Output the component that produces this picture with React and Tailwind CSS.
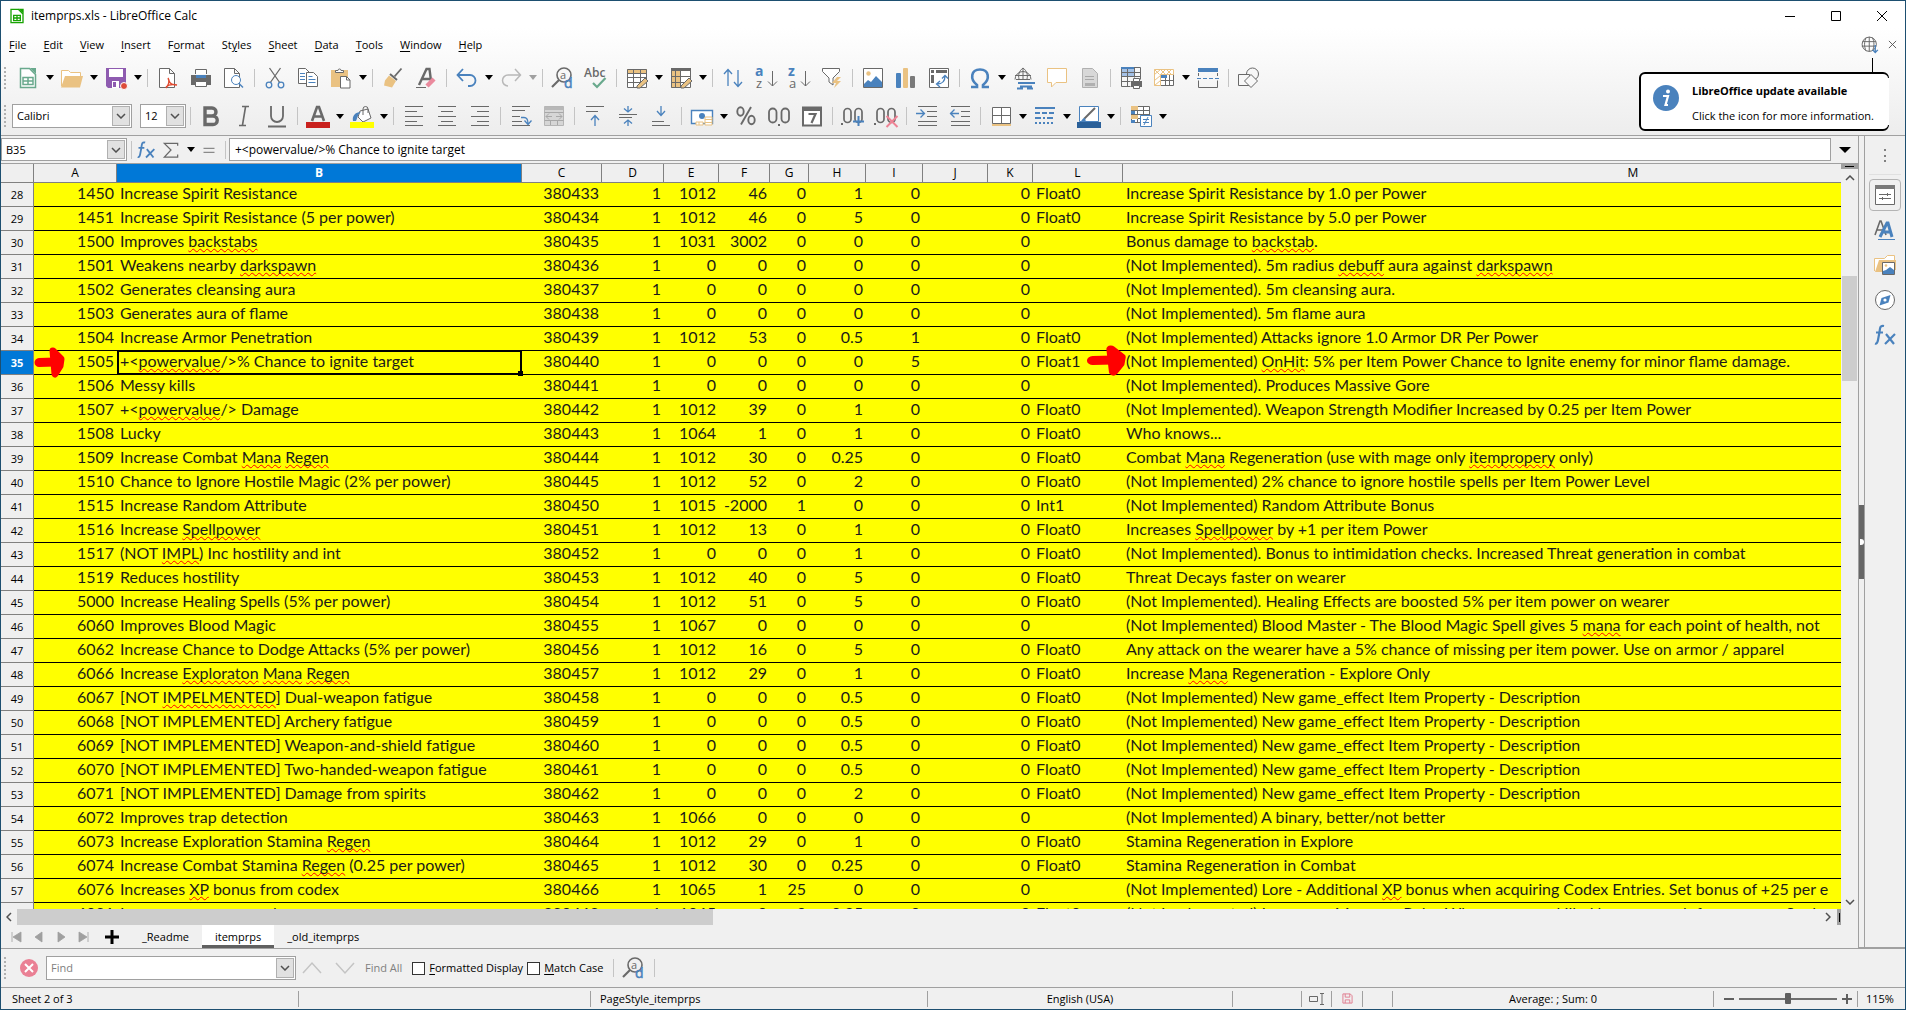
import { useState } from 'react';

const GRAY = '#696969';
const BLUE = '#4a82bd';
const TAN = '#eac282';

const COLUMNS = [
  { name: 'A', width: 'w-[83px]' },
  { name: 'B', width: 'w-[405px]' },
  { name: 'C', width: 'w-[80px]' },
  { name: 'D', width: 'w-[62px]' },
  { name: 'E', width: 'w-[55px]' },
  { name: 'F', width: 'w-[51px]' },
  { name: 'G', width: 'w-[39px]' },
  { name: 'H', width: 'w-[57px]' },
  { name: 'I', width: 'w-[57px]' },
  { name: 'J', width: 'w-[65px]' },
  { name: 'K', width: 'w-[45px]' },
  { name: 'L', width: 'w-[90px]' },
  { name: 'M', width: 'w-[1021px]' },
];

// words between tildes get the spell check underline
// [row, A, B, C, D, E, F, G, H, I, K, L, M]
const ROWS = [
  [28, 1450, 'Increase Spirit Resistance', 380433, 1, 1012, 46, 0, 1, 0, 0, 'Float0', 'Increase Spirit Resistance by 1.0 per Power'],
  [29, 1451, 'Increase Spirit Resistance (5 per power)', 380434, 1, 1012, 46, 0, 5, 0, 0, 'Float0', 'Increase Spirit Resistance by 5.0 per Power'],
  [30, 1500, 'Improves ~backstabs~', 380435, 1, 1031, 3002, 0, 0, 0, 0, '', 'Bonus damage to ~backstab~.'],
  [31, 1501, 'Weakens nearby ~darkspawn~', 380436, 1, 0, 0, 0, 0, 0, 0, '', '(Not Implemented). 5m radius ~debuff~ aura against ~darkspawn~'],
  [32, 1502, 'Generates cleansing aura', 380437, 1, 0, 0, 0, 0, 0, 0, '', '(Not Implemented). 5m cleansing aura.'],
  [33, 1503, 'Generates aura of flame', 380438, 1, 0, 0, 0, 0, 0, 0, '', '(Not Implemented). 5m flame aura'],
  [34, 1504, 'Increase Armor Penetration', 380439, 1, 1012, 53, 0, 0.5, 1, 0, 'Float0', '(Not Implemented) Attacks ignore 1.0 Armor DR Per Power'],
  [35, 1505, '+<~powervalue~/>% Chance to ignite target', 380440, 1, 0, 0, 0, 0, 5, 0, 'Float1', '(Not Implemented) ~OnHit~: 5% per Item Power Chance to Ignite enemy for minor flame damage.'],
  [36, 1506, 'Messy kills', 380441, 1, 0, 0, 0, 0, 0, 0, '', '(Not Implemented). Produces Massive Gore'],
  [37, 1507, '+<~powervalue~/> Damage', 380442, 1, 1012, 39, 0, 1, 0, 0, 'Float0', '(Not Implemented). Weapon Strength Modifier Increased by 0.25 per Item Power'],
  [38, 1508, 'Lucky', 380443, 1, 1064, 1, 0, 1, 0, 0, 'Float0', 'Who knows...'],
  [39, 1509, 'Increase Combat ~Mana~ ~Regen~', 380444, 1, 1012, 30, 0, 0.25, 0, 0, 'Float0', 'Combat ~Mana~ Regeneration (use with mage only ~itempropery~ only)'],
  [40, 1510, 'Chance to Ignore Hostile Magic (2% per power)', 380445, 1, 1012, 52, 0, 2, 0, 0, 'Float0', '(Not Implemented) 2% chance to ignore hostile spells per Item Power Level'],
  [41, 1515, 'Increase Random Attribute', 380450, 1, 1015, -2000, 1, 0, 0, 0, 'Int1', '(Not Implemented) Random Attribute Bonus'],
  [42, 1516, 'Increase ~Spellpower~', 380451, 1, 1012, 13, 0, 1, 0, 0, 'Float0', 'Increases ~Spellpower~ by +1 per item Power'],
  [43, 1517, '(NOT ~IMPL~) Inc hostility and int', 380452, 1, 0, 0, 0, 1, 0, 0, 'Float0', '(Not Implemented). Bonus to intimidation checks. Increased Threat generation in combat'],
  [44, 1519, 'Reduces hostility', 380453, 1, 1012, 40, 0, 5, 0, 0, 'Float0', 'Threat Decays faster on wearer'],
  [45, 5000, 'Increase Healing Spells (5% per power)', 380454, 1, 1012, 51, 0, 5, 0, 0, 'Float0', '(Not Implemented). Healing Effects are boosted 5% per item power on wearer'],
  [46, 6060, 'Improves Blood Magic', 380455, 1, 1067, 0, 0, 0, 0, 0, '', '(Not Implemented) Blood Master - The Blood Magic Spell gives 5 ~mana~ for each point of health, not'],
  [47, 6062, 'Increase Chance to Dodge Attacks (5% per power)', 380456, 1, 1012, 16, 0, 5, 0, 0, 'Float0', 'Any attack on the wearer have a 5% chance of missing per item power. Use on armor / apparel'],
  [48, 6066, 'Increase ~Exploraton~ ~Mana~ ~Regen~', 380457, 1, 1012, 29, 0, 1, 0, 0, 'Float0', 'Increase ~Mana~ Regeneration - Explore Only'],
  [49, 6067, '[NOT ~IMPELMENTED~] Dual-weapon fatigue', 380458, 1, 0, 0, 0, 0.5, 0, 0, 'Float0', '(Not Implemented) New game_effect Item Property - Description'],
  [50, 6068, '[NOT IMPLEMENTED] Archery fatigue', 380459, 1, 0, 0, 0, 0.5, 0, 0, 'Float0', '(Not Implemented) New game_effect Item Property - Description'],
  [51, 6069, '[NOT IMPLEMENTED] Weapon-and-shield fatigue', 380460, 1, 0, 0, 0, 0.5, 0, 0, 'Float0', '(Not Implemented) New game_effect Item Property - Description'],
  [52, 6070, '[NOT IMPLEMENTED] Two-handed-weapon fatigue', 380461, 1, 0, 0, 0, 0.5, 0, 0, 'Float0', '(Not Implemented) New game_effect Item Property - Description'],
  [53, 6071, '[NOT IMPLEMENTED] Damage from spirits', 380462, 1, 0, 0, 0, 2, 0, 0, 'Float0', '(Not Implemented) New game_effect Item Property - Description'],
  [54, 6072, 'Improves trap detection', 380463, 1, 1066, 0, 0, 0, 0, 0, '', '(Not Implemented) A binary, better/not better'],
  [55, 6073, 'Increase Exploration Stamina ~Regen~', 380464, 1, 1012, 29, 0, 1, 0, 0, 'Float0', 'Stamina Regeneration in Explore'],
  [56, 6074, 'Increase Combat Stamina ~Regen~ (0.25 per power)', 380465, 1, 1012, 30, 0, 0.25, 0, 0, 'Float0', 'Stamina Regeneration in Combat'],
  [57, 6076, 'Increases ~XP~ bonus from codex', 380466, 1, 1065, 1, 25, 0, 0, 0, '', '(Not Implemented) Lore - Additional ~XP~ bonus when acquiring Codex Entries. Set bonus of +25 per e'],
  [58, 6081, 'Increase mana as used', 380468, 1, 1065, 0, 0, 0.25, 0, 0, 'Float0', '(Not Implemented) Immune a Manner - Rules When corpses skilled because each foe senses a Soul'],
];

const Svg = ({ children, className = 'h-6 w-6' }) => (
  <svg viewBox="0 0 24 24" fill="none" stroke={GRAY} className={`overflow-visible ${className}`} aria-hidden="true">
    {children}
  </svg>
);

const Page = ({ stroke = GRAY, x = 4 }) => (
  <path d={`M${x + 0.5} 2.5h10l5 5v14h-15z M${x + 10.5} 2.5v5h5`} stroke={stroke} fill="#fff" />
);

const ICONS = {
  calc: (
    <>
      <path d="M4.5 2.5h9l6 6v13h-15z" stroke="#69a98d" fill="#fff" strokeWidth="1.5" />
      <path d="M14 2h6v6z" fill="#69a98d" stroke="none" />
      <path d="M7 11.500h10v7H7zM7 15h10M12 11.500v7" stroke="#69a98d" strokeWidth="1.5" />
    </>
  ),
  calcApp: (
    <>
      <path d="M3 2h11l7 7v13H3z" stroke="#18a303" fill="#fff" strokeWidth="2" />
      <path d="M14 1h8v8z" fill="#18a303" stroke="none" />
      <path d="M7 11h10v8H7zM7 15h10M12 11v8" stroke="#18a303" strokeWidth="2" />
    </>
  ),
  open: (
    <>
      <path d="M1.500 20V4.500h7l2 2h10V10" stroke={TAN} fill="#fff" />
      <path d="M1 21.500 5 10h18l-3 11.500z" fill={TAN} stroke="none" />
    </>
  ),
  save: (
    <>
      <path d="M2 2h20v20H4l-2-2z" fill="#8e5bb0" stroke="none" />
      <path d="M5 3h14v8H5zM8 15h7v7H8z" fill="#fff" stroke="none" />
      <path d="M9 16h3v5H9z" fill="#8e5bb0" stroke="none" />
      <circle cx="20" cy="20" r="3.500" fill="#dd4b39" stroke="#fff" />
    </>
  ),
  pdf: (
    <>
      <Page x={3} />
      <path d="M12 12c2 3 1 6-2 10M13 15c1 3 4 4 8 4M10 21c3-3 6-3 11-2" stroke="#e0492f" strokeWidth="1.400" />
    </>
  ),
  print: (
    <>
      <path d="M6.500 8V3.500h11V8" fill="#fff" />
      <path d="M2 9h20v10H2z" fill={GRAY} stroke="none" />
      <path d="M7 9h10v3H7z" fill={BLUE} stroke="none" />
      <path d="M6.500 15.500h11v5h-11z" fill="#fff" />
    </>
  ),
  preview: (
    <>
      <Page x={2} />
      <circle cx="14" cy="14" r="4.500" stroke={BLUE} fill="#fff" />
      <path d="m17 17.500 4 4" stroke={BLUE} strokeWidth="1.500" />
    </>
  ),
  cut: (
    <>
      <path d="M6.500 2 17 17M17.500 2 7 17" strokeWidth="1.300" />
      <circle cx="6" cy="19" r="2.800" stroke={BLUE} strokeWidth="1.300" />
      <circle cx="18" cy="19" r="2.800" stroke={BLUE} strokeWidth="1.300" />
    </>
  ),
  copy: (
    <>
      <path d="M2.500 2.500h7l4 4v11h-11z" fill="#fff" />
      <path d="M10.500 6.500h7l4 4v10h-11z" fill="#fff" />
      <path d="M4 7.500h5M4 10.500h5M4 13.500h5M12.500 13.500h7M12.500 16.500h7M12.500 10.500h4" stroke={BLUE} />
    </>
  ),
  paste: (
    <>
      <path d="M2 4h17v17H2z" fill={TAN} stroke="none" />
      <path d="M6.500 6.500v-2h2.500a1.500 1.500 0 0 1 3 0h2.500v2z" fill="#fff" />
      <path d="M11.500 10.500h6l3.500 3.500v8h-9.500z" fill="#fff" />
      <path d="M17.500 10.500V14H21" />
    </>
  ),
  brush: (
    <>
      <path d="m20.500 2.500-7 8" strokeWidth="1.800" />
      <path d="m9 8 7 6" strokeWidth="2" />
      <path d="M8 9.500 15 15l-4 6.500-8-2 1-5z" fill={TAN} stroke="none" />
    </>
  ),
  clear: (
    <>
      <path d="M5 19 12.500 3h3L17 15M8 13h8" strokeWidth="2.400" />
      <path d="M2 21.500h10" />
      <path d="m13 20 7-7" stroke="#ea8a9d" strokeWidth="4.500" />
    </>
  ),
  undo: <path d="M8 3 2.500 9 8 15M3 9h12a5.500 5.500 0 0 1 0 11h-2" stroke={BLUE} strokeWidth="1.800" />,
  redo: <path d="m16 3 5.500 6L16 15M21 9H9a5.500 5.500 0 0 0 0 11" stroke="#b8b8b8" strokeWidth="1.500" />,
  find: (
    <>
      <circle cx="13" cy="9" r="7" strokeWidth="1.600" />
      <path d="m8 14-7 7" strokeWidth="2.200" />
      <text x="9" y="13" fontSize="11" fontFamily="Open Sans, sans-serif" fill={GRAY} stroke="none">a</text>
      <text x="13" y="22" fontSize="14" fontFamily="Open Sans, sans-serif" fill={BLUE} stroke={BLUE} strokeWidth="0.500">d</text>
    </>
  ),
  spell: (
    <>
      <text x="0" y="11" fontSize="12" fontWeight="600" fontFamily="Open Sans, sans-serif" fill={GRAY} stroke="none">Abc</text>
      <path d="m9 17 4 4 8.500-9" stroke="#69a98d" strokeWidth="2.200" />
    </>
  ),
  rows: (
    <>
      <path d="M2.500 3.500h19v18h-19z" fill="#fff" />
      <path d="M2 3h20v4H2z" fill={TAN} stroke="none" />
      <path d="M2.500 3.500h19v4h-19zM2.500 11.500h19M2.500 16.500h19M8.500 3.500v18M15.500 3.500v18" />
      <path d="m12 20 8-8 3 3-8 7h-3z" fill={TAN} stroke={GRAY} />
    </>
  ),
  cols: (
    <>
      <path d="M2.500 3.500h19v18h-19z" fill="#fff" />
      <path d="M2 4h9v18H2z" fill={TAN} stroke="none" />
      <path d="M2 2h20v3H2z" fill={GRAY} stroke="none" />
      <path d="M2.500 3.500h19M2.500 10.500h19M2.500 16.500h19M2.500 3v18.500h9V3M21.500 4v8M6.500 4v18" />
      <path d="m12 20 8-8 3 3-8 7h-3z" fill={TAN} stroke={GRAY} />
    </>
  ),
  sort: <path d="M7 20V4M3 8l4-4.500L11 8M17 4v16M13 16l4 4.500 4-4.500" stroke={BLUE} strokeWidth="1.300" />,
  sortAsc: (
    <>
      <text x="1" y="10" fontSize="14" fontWeight="700" fontFamily="Open Sans, sans-serif" fill={BLUE} stroke="none">a</text>
      <text x="2" y="22" fontSize="13" fontFamily="Open Sans, sans-serif" fill={GRAY} stroke="none">z</text>
      <path d="M18.500 5v15M14 15.500l4.500 4.500 4.500-4.500" />
    </>
  ),
  sortDesc: (
    <>
      <text x="1" y="10" fontSize="14" fontWeight="700" fontFamily="Open Sans, sans-serif" fill={BLUE} stroke="none">z</text>
      <text x="2" y="22" fontSize="13" fontFamily="Open Sans, sans-serif" fill={GRAY} stroke="none">a</text>
      <path d="M18.500 5v15M14 15.500l4.500 4.500 4.500-4.500" />
    </>
  ),
  filter: (
    <>
      <path d="M2.500 2.500h17v3L13 12v7l-4-3v-4L2.500 5.500z" fill="#fff" />
      <path d="m17 11-5 6h4l-2 5 7-7h-4l4-4z" fill={TAN} stroke="none" />
    </>
  ),
  image: (
    <>
      <path d="M2.500 2.500h19v19h-19z" fill="#fff" />
      <circle cx="7.500" cy="7.500" r="2.200" fill={TAN} stroke="none" />
      <path d="M3 21v-3l4-4 3 2 5-6 6 6v5z" fill={BLUE} stroke="none" />
    </>
  ),
  chart: (
    <>
      <rect x="2" y="7" width="5" height="15" rx="1" fill={BLUE} stroke="none" />
      <rect x="9" y="2" width="5" height="20" rx="1" fill={TAN} stroke="none" />
      <rect x="16" y="10" width="5" height="12" rx="1" fill="#7a7a7a" stroke="none" />
    </>
  ),
  pivot: (
    <>
      <path d="M2.500 2.500h19v19h-19z" fill="#fff" />
      <path d="M4 4h3v3H4zM9 4h11v3H9zM4 9h3v8H4z" fill={GRAY} stroke="none" />
      <path d="M10 18c5 0 8-3 8-8M15 12.500l3-3 3 3M13 15l-3.500 3 3.500 3" stroke={BLUE} strokeWidth="1.300" />
    </>
  ),
  omega: (
    <path d="M3 21h6v-2C1.500 13 3 3.500 12 3.500S22.500 13 15 19v2h6" stroke={BLUE} strokeWidth="2.600" />
  ),
  link: (
    <>
      <path d="M3 13.500a8 8 0 1 1 16 0M3 9.500h16M4 13.500h14M11 2v12M7 13c-1-4 0-8 4-11 4 3 5 7 4 11" />
      <path d="M6 17h7M15 17h8M8 20.500h12M5 22.500h6M15 22.500h6M11 17h4" stroke={BLUE} strokeWidth="2" />
    </>
  ),
  comment: <path d="M2.500 2.500h19v14H11l-4.500 4.500V16.500h-4z" stroke={TAN} fill="#fff" />,
  header: (
    <>
      <path d="M4.500 2.500h10l5 5v14h-15z" fill="#d8d8d8" stroke="#b0b0b0" />
      <path d="M7 10.500h9M7 13.500h9" stroke="#a8a8a8" />
      <path d="M7 17h10v3H7z" fill="#b0b0b0" stroke="none" />
    </>
  ),
  printArea: (
    <>
      <path d="M2 2h13v8H2z" fill="#a4c1e6" stroke="none" />
      <path d="M2.500 1.500h19v12M2.500 1.500v19h9M2.500 6.500h19M2.500 10.500h19M2.500 15.500h9M8.500 1.500v19M15.500 1.500v10" />
      <path d="M2 1h13v2H2z" fill={BLUE} stroke="none" />
      <path d="M12 15h11v6H12z" fill={GRAY} stroke="none" />
      <path d="M14.500 12.500h6v3h-6zM14.500 19.500h6v3h-6z" fill="#fff" />
    </>
  ),
  freeze: (
    <>
      <path d="M8.500 8.500h13v11h-13M8.500 14.500h13M13.500 8.500v11M17.500 8.500v11" fill="#fff" />
      <path d="M2.500 3.500h19v5h-13v11h-6zM2.500 8.500l6-5M8.500 8.500l5-5M14.500 8.500l5-5M2.500 14.500l6-5M2.500 19.500l6-5M2.500 3.500l5 5M8.500 3.500l5 5M14.500 3.500l5 5" stroke={TAN} fill="#fff" />
      <path d="M9 9h6v3H9z" fill={BLUE} stroke="none" />
    </>
  ),
  split: (
    <>
      <path d="M2.500 7v3M21.500 7v3M2.500 14.500v7h19v-7" />
      <path d="M2 2h20v4H2z" fill={BLUE} stroke="none" />
      <path d="M1 12.500h22" stroke={BLUE} strokeDasharray="4 2" />
    </>
  ),
  shapes: (
    <>
      <circle cx="15.500" cy="8" r="6" />
      <path d="M1.500 8.500h11v11h-11z" fill="#f8f8f8" />
      <path d="m14 8.500 6.500 6.500-6.500 6.500L7.500 15z" fill="#f8f8f8" />
    </>
  ),
  bold: <path d="M6 4h7a4 4 0 0 1 0 8H6zM6 12h8a4.200 4.200 0 0 1 0 8.500H6z" strokeWidth="3.400" />,
  italic: <path d="M10 2.500h7M7 21.500h7M13.500 3 10.500 21" strokeWidth="1.600" />,
  underline: <path d="M6 2v10a6 6 0 0 0 12 0V2M3 22.500h18" strokeWidth="1.800" />,
  fontColor: (
    <>
      <path d="M6 17 11 3h2l5 14M8 12.500h8" strokeWidth="2.600" />
      <path d="M0 18h24v6H0z" fill="#c9211e" stroke="none" />
    </>
  ),
  fill: (
    <>
      <path d="M10 7 18 5l3 9-8 4-5-5z" fill="#fff" />
      <path d="M13 11V5a2.500 2.500 0 0 1 5 0v4" />
      <path d="M3 17c-1-5 2-9 8-9-4 3-3 5-5 9z" fill={BLUE} stroke="none" />
      <path d="M0 18h24v6H0z" fill="#ffff00" stroke="none" />
    </>
  ),
  alignLeft: <path d="M3 2.500h18M3 7.500h12M3 12.500h18M3 17.500h12M3 21.500h18" />,
  alignCenter: <path d="M3 2.500h18M6 7.500h12M3 12.500h18M6 17.500h12M3 21.500h18" />,
  alignRight: <path d="M3 2.500h18M9 7.500h12M3 12.500h18M9 17.500h12M3 21.500h18" />,
  wrap: (
    <>
      <path d="M3 2.500h18M3 6.500h13M3 12.500h8M3 17.500h10M3 21.500h18" />
      <path d="M12 13.500h3c3 0 4 2 4 6M15.500 16.500l3.500 4 3.500-4" stroke={BLUE} strokeWidth="1.300" />
    </>
  ),
  merge: (
    <>
      <path d="M2.500 2.500h19v19h-19z" fill="#d6d6d6" stroke="#b5b5b5" />
      <path d="M2 3h20v3H2z" fill="#b8b8b8" stroke="none" />
      <path d="M2.500 8.500h19M2.500 16.500h19M8.500 17v4M15.500 17v4M4 12.500h6M14 12.500h6M7 9.500 4 12.500l3 3M17 9.500l3 3-3 3" stroke="#a8a8a8" />
    </>
  ),
  alignTop: (
    <>
      <path d="M3 2.500h18M3 7.500h12" />
      <path d="M12 22V12M8 16l4-4.500 4 4.500" stroke={BLUE} strokeWidth="1.300" />
    </>
  ),
  alignMiddle: (
    <>
      <path d="M3 10.500h18M3 13.500h13" />
      <path d="M12 2v6M8 4.500 12 8l4-3.500M12 22v-6M8 19.500l4-3.500 4 3.500" stroke={BLUE} strokeWidth="1.300" />
    </>
  ),
  alignBottom: (
    <>
      <path d="M3 17.500h12M3 21.500h18" />
      <path d="M12 2v9M8 7l4 4.500L16 7" stroke={BLUE} strokeWidth="1.300" />
    </>
  ),
  currency: (
    <>
      <path d="M1.500 6.500h21v13h-21z" fill="#fff" stroke={BLUE} strokeWidth="1.400" />
      <circle cx="12" cy="12" r="3" fill={BLUE} stroke="none" />
      <path d="M15 13h7v8h-7zM6 18h7v3H6z" fill="#fff" stroke={TAN} />
      <path d="M15 15.500h7M15 18.500h7M9 18v3" stroke={TAN} />
    </>
  ),
  percent: (
    <>
      <ellipse cx="6.500" cy="7.500" rx="3.200" ry="4.200" strokeWidth="1.900" />
      <ellipse cx="17.500" cy="16" rx="3.200" ry="4.200" strokeWidth="1.900" />
      <path d="M17 3 7 20.500" strokeWidth="1.900" />
    </>
  ),
  number: (
    <>
      <rect x="2" y="4.500" width="7.500" height="14" rx="3.700" strokeWidth="1.800" />
      <rect x="14.500" y="4.500" width="7.500" height="14" rx="3.700" strokeWidth="1.800" />
      <path d="M11 20h2v2h-2z" fill={GRAY} stroke="none" />
    </>
  ),
  date: (
    <>
      <path d="M3 3.500h18v18H3z" fill="#fff" strokeWidth="2" />
      <path d="M2 3h20v4H2z" fill={GRAY} stroke="none" />
      <path d="M8.500 10h7l-4 9" strokeWidth="2.200" />
    </>
  ),
  addDecimal: (
    <>
      <rect x="3" y="4.500" width="7" height="14" rx="3.500" strokeWidth="1.700" />
      <rect x="14" y="4.500" width="7" height="14" rx="3.500" strokeWidth="1.700" />
      <path d="M0 19h2v2H0z" fill={GRAY} stroke="none" />
      <path d="M17.500 12v10M12 17.500h11" stroke={BLUE} strokeWidth="2" />
    </>
  ),
  delDecimal: (
    <>
      <rect x="3" y="4.500" width="7" height="14" rx="3.500" strokeWidth="1.700" />
      <rect x="14" y="4.500" width="7" height="14" rx="3.500" strokeWidth="1.700" />
      <path d="M0 19h2v2H0z" fill={GRAY} stroke="none" />
      <path d="m12.500 12 11 11m0-11-11 11" stroke="#ee8294" strokeWidth="2" />
    </>
  ),
  indent: (
    <>
      <path d="M3 2.500h19M12 7.500h10M12 12.500h10M3 17.500h19M3 21.500h19" />
      <path d="M1 9.500h8M5.500 5.500l4 4-4 4" stroke={BLUE} strokeWidth="1.300" />
    </>
  ),
  outdent: (
    <>
      <path d="M3 2.500h19M13 7.500h9M13 12.500h9M3 17.500h19M3 21.500h19" />
      <path d="M2 9.500h9M6.500 5.500l-4 4 4 4" stroke={BLUE} strokeWidth="1.300" />
    </>
  ),
  borders: (
    <>
      <path d="M3.500 3.500h18v16h-18zM12.500 3.500v16M3.500 11.500h18" fill="#fff" />
      <path d="M3 21h19" stroke={TAN} strokeWidth="2" />
    </>
  ),
  lineStyle: (
    <g stroke={BLUE} strokeWidth="2">
      <path d="M2 4h20" />
      <path d="M2 9h20" strokeDasharray="5 2" />
      <path d="M2 14h20" strokeDasharray="6 2 2 2" />
      <path d="M2 19h20" strokeDasharray="2 2" />
    </g>
  ),
  lineColor: (
    <>
      <path d="M2.500 2.500h19v15h-19z" fill="#fff" stroke={BLUE} />
      <path d="M18 4 7 15" strokeWidth="2" />
      <path d="M8 14c-3 0-3 3-5 4h6z" fill={BLUE} stroke="none" />
      <path d="M0 18h24v6H0z" fill="#2a6099" stroke="none" />
    </>
  ),
  conditional: (
    <>
      <path d="M2.500 2.500h18v16h-18zM8.500 2.500v16M14.500 2.500v16M2.500 6.500h18M2.500 10.500h18M2.500 14.500h18" fill="#fff" />
      <path d="M2 2h7v4H2zM2 11h7v4H2z" fill={TAN} stroke="none" />
      <path d="M2 7h4v3H2zM2 16h4v3H2z" fill={BLUE} stroke="none" />
      <path d="M11.500 11.500h11v11h-11zM14 15.500h6M14 18.500h6M19 13l-4 8" stroke={BLUE} fill="#fff" />
    </>
  ),
  fx: (
    <>
      <path d="M11 3C7 2 7 5 6.500 9L5 17c-.5 3-1.500 4-3 3.500M3 9.500h7" stroke={BLUE} strokeWidth="2.200" />
      <path d="m13 11 8 10m1-10-10 10" stroke={BLUE} strokeWidth="2.200" />
    </>
  ),
  sum: <path d="M20 7V4H4l8 8-8 8.500h16v-3" strokeWidth="1.500" />,
  equals: <path d="M1 8.500h22M1 16.500h22" stroke="#8a8a8a" strokeWidth="2.500" />,
  properties: (
    <>
      <path d="M2.500 2.500h19v19h-19z" fill="#fff" />
      <path d="M2 2h20v4H2z" fill="#7a7a7a" stroke="none" />
      <path d="M6 11.500h12M6 15.500h12M14.500 10v3M9.500 14v3" />
    </>
  ),
  styles: (
    <>
      <path d="M2 17 7 3h1l5 14M4 12h7" strokeWidth="1.600" />
      <path d="m7 19 7-14h1l4 14M10 14h8" stroke={BLUE} strokeWidth="3" />
      <path d="M5 21.500h17" stroke={BLUE} />
    </>
  ),
  gallery: (
    <>
      <path d="M1.500 18V5.500h10l3-3h7V7" stroke={TAN} fill="#fff" />
      <path d="M2 19 6 7h17v10H10v2z" fill={TAN} stroke="none" />
      <path d="M9.500 9.500h12v12h-12z" fill="#fff" />
      <path d="M10 21v-3l3-1 4-3 4 3v4z" fill={BLUE} stroke="none" />
      <circle cx="13" cy="12.500" r="1.300" fill={TAN} stroke="none" />
    </>
  ),
  navigator: (
    <>
      <circle cx="12" cy="12" r="9.500" fill="#fff" />
      <path d="m17.500 7-2 7.500-9 3 2-7.500z" fill={BLUE} stroke="none" />
      <circle cx="12" cy="12" r="1.600" fill="#fff" stroke="none" />
    </>
  ),
  update: (
    <>
      <circle cx="11" cy="11" r="9.500" strokeWidth="1.300" />
      <path d="M2 7.500h18M1 13.500h19M11 1v20M7 2c-3 5-3 13 0 18M15 2c3 5 3 13 0 18" strokeWidth="1.300" />
      <path d="M19 12v10M15.500 18.500 19 22l3.500-3.500" stroke={BLUE} strokeWidth="1.800" />
    </>
  ),
};

const Caret = ({ muted }) => (
  <svg viewBox="0 0 8 5" className={`h-[5px] w-2 ${muted ? 'fill-[#a0a0a0]' : 'fill-black'}`} aria-hidden="true">
    <path d="M0 0h8L4 5z" />
  </svg>
);

const Chevron = ({ className = '' }) => (
  <svg viewBox="0 0 10 6" fill="none" stroke="#505050" strokeWidth="1.500" className={`h-[6px] w-[10px] ${className}`} aria-hidden="true">
    <path d="m1 1 4 4 4-4" />
  </svg>
);

const Grip = () => <span className="h-[22px] w-0 shrink-0 border-l-2 border-dotted border-[#b0b0b0]" />;

const Separator = () => (
  <span className="flex w-2 shrink-0 justify-center">
    <span className="h-[18px] w-px bg-[#c4c4c4]" />
  </span>
);

// "|" is a separator, a trailing "+" adds a drop-down arrow
const Tools = ({ items }) =>
  items.map((item, i) => {
    if (item === '|') return <Separator key={i} />;
    const name = item.replace('+', '');
    return (
      <span key={i} className="flex shrink-0 items-center">
        <button type="button" aria-label={name} className="flex w-[33px] justify-center">
          <Svg>{ICONS[name]}</Svg>
        </button>
        {item.endsWith('+') && (
          <button type="button" aria-label={`${name} options`} className="flex h-6 w-[11px] items-center justify-center">
            <Caret muted={name === 'redo'} />
          </button>
        )}
      </span>
    );
  });

const STANDARD = ['calc+', 'open+', 'save+', '|', 'pdf', 'print', 'preview', '|', 'cut', 'copy', 'paste+', '|', 'brush', 'clear', '|', 'undo+', 'redo+', '|', 'find', 'spell', '|', 'rows+', 'cols+', '|', 'sort', 'sortAsc', 'sortDesc', 'filter', '|', 'image', 'chart', 'pivot', '|', 'omega+', 'link', 'comment', 'header', '|', 'printArea', 'freeze+', 'split', '|', 'shapes'];

const FORMATTING = ['|', 'bold', 'italic', 'underline', '|', 'fontColor+', 'fill+', '|', 'alignLeft', 'alignCenter', 'alignRight', '|', 'wrap', 'merge', '|', 'alignTop', 'alignMiddle', 'alignBottom', '|', 'currency+', 'percent', 'number', 'date', '|', 'addDecimal', 'delDecimal', '|', 'indent', 'outdent', '|', 'borders+', 'lineStyle+', 'lineColor+', '|', 'conditional+'];

// [text before the access key, access key, rest]
const MENUS = [
  ['', 'F', 'ile'], ['', 'E', 'dit'], ['', 'V', 'iew'], ['', 'I', 'nsert'], ['F', 'o', 'rmat'], ['St', 'y', 'les'],
  ['', 'S', 'heet'], ['', 'D', 'ata'], ['', 'T', 'ools'], ['', 'W', 'indow'], ['', 'H', 'elp'],
];

const Combo = ({ label, value, placeholder, className }) => (
  <div className={`flex items-stretch border border-[#a0a0a0] bg-white p-px ${className}`}>
    <input
      aria-label={label}
      defaultValue={value}
      placeholder={placeholder}
      className="min-w-0 flex-1 px-[3px] outline-none placeholder:text-[#808080]"
    />
    <button type="button" aria-label={`${label} list`} className="flex w-[18px] items-center justify-center border border-[#b0b0b0] bg-[#e1e1e1]">
      <Chevron />
    </button>
  </div>
);

const SpellText = ({ text }) =>
  text.split('~').map((part, i) =>
    i % 2 ? (
      <span key={i} className="underline decoration-[#ff0000] decoration-wavy decoration-1 underline-offset-1 [text-decoration-skip-ink:none]">{part}</span>
    ) : (
      part
    )
  );

const RedArrow = ({ className }) => (
  <svg viewBox="0 0 34 34" preserveAspectRatio="none" fill="none" stroke="#ff0000" strokeLinecap="round" strokeLinejoin="round" className={`pointer-events-none absolute z-10 h-[34px] ${className}`} aria-hidden="true">
    <path d="M6 17.500 22 17" strokeWidth="9" />
    <path d="m20 6 8 8-1 7-5 8z" fill="#ff0000" strokeWidth="7" />
  </svg>
);

const Cell = ({ value, children }) => (
  <td className={`relative h-6 border-b border-black px-[3px] pb-[3px] ${typeof value === 'number' ? 'text-right' : 'text-left'}`}>
    {typeof value === 'string' ? <SpellText text={value} /> : value}
    {children}
  </td>
);

const Sheet = ({ selected }) => (
  <table className="w-max table-fixed border-separate border-spacing-0 whitespace-nowrap bg-[#ffff00] font-['Lato',sans-serif] text-[16px] leading-[20px] text-[#1a1a1a]">
    <thead>
      <tr className="bg-[#efefef] font-['Open_Sans',sans-serif] text-[12px] leading-[18px] text-black">
        <th aria-label="Select all" className="h-[19px] w-[33px] border-b border-r border-[#808080]" />
        {COLUMNS.map((col) => (
          <th
            key={col.name}
            className={`h-[19px] border-b border-r border-[#808080] p-0 ${col.width} ${
              col.name === 'B' ? 'bg-[#0078d7] font-bold text-white' : 'font-normal'
            }`}
          >
            {col.name}
          </th>
        ))}
      </tr>
    </thead>
    <tbody>
      {ROWS.map(([row, a, b, c, d, e, f, g, h, i, k, l, m]) => (
        <tr key={row}>
          <th
            className={`h-6 border-b border-r border-[#808080] p-0 font-['Open_Sans',sans-serif] text-[11px] ${
              row === selected ? 'bg-[#0078d7] font-bold text-white' : 'bg-[#efefef] font-normal text-black'
            }`}
          >
            {row}
          </th>
          <Cell value={a}>{row === selected && <RedArrow className="-left-px -top-1.5 w-[34px]" />}</Cell>
          <Cell value={b}>
            {row === selected && (
              <span className="pointer-events-none absolute -inset-y-px inset-x-0 border-2 border-black">
                <span className="absolute -bottom-[3px] -right-[3px] h-[5px] w-[5px] bg-black" />
              </span>
            )}
          </Cell>
          <Cell value={c} />
          <Cell value={d} />
          <Cell value={e} />
          <Cell value={f} />
          <Cell value={g} />
          <Cell value={h} />
          <Cell value={i} />
          <Cell />
          <Cell value={k} />
          <Cell value={l}>{row === selected && <RedArrow className="-right-1.5 -top-2 w-[44px]" />}</Cell>
          <Cell value={m} />
        </tr>
      ))}
    </tbody>
  </table>
);

const UpdateCallout = () => (
  <div className="absolute right-4 top-[71px] z-20 flex w-[250px] gap-[13px] rounded-md border-2 border-r border-black bg-white px-3 pb-[5px] pt-[9px]">
    <span className="absolute -top-4 right-[15px] h-4 w-px bg-black" />
    <span className="absolute -right-px inset-y-1 w-px bg-white" />
    <svg viewBox="0 0 26 26" className="mt-0.5 h-[26px] w-[26px] shrink-0" aria-hidden="true">
      <circle cx="13" cy="13" r="13" fill={BLUE} />
      <circle cx="15" cy="6.500" r="2" fill="#fff" />
      <path d="M10 11h5l-2.500 9h2.500" fill="none" stroke="#fff" strokeWidth="2.200" />
    </svg>
    <div className="flex flex-col gap-[9px] whitespace-nowrap text-[11px] leading-4">
      <strong>LibreOffice update available</strong>
      <span>Click the icon for more information.</span>
    </div>
  </div>
);

export default function App() {
  const [tab, setTab] = useState('itemprps');
  const [zoom, setZoom] = useState(50);

  return (
    <div className="relative flex h-screen min-w-0 flex-col overflow-hidden border border-[#1d4f70] bg-[#f0f0f0] font-['Open_Sans',sans-serif] text-[11px] leading-4 text-black">
      {/* Title, menu and toolbars */}
      <header className="flex shrink-0 flex-col border-b border-[#a0a0a0] bg-gradient-to-b from-white from-20% to-[#ededed] pb-[5px]">
        <div className="flex h-[30px] items-center pl-2">
          <Svg className="h-4 w-4">{ICONS.calcApp}</Svg>
          <h1 className="ml-1.5 flex-1 text-[12px]">itemprps.xls - LibreOffice Calc</h1>
          {[['Minimize', 'M0 5.500h10'], ['Maximize', 'M.5.5h9v9h-9z'], ['Close', 'm0 0 10 10M10 0 0 10']].map(([label, d]) => (
            <button key={label} type="button" aria-label={label} className="flex h-full w-[46px] items-center justify-center">
              <svg viewBox="0 0 10 10" fill="none" stroke="#000" className="h-[10px] w-[10px]" aria-hidden="true"><path d={d} /></svg>
            </button>
          ))}
        </div>
        <nav className="flex h-[27px] items-center gap-[17px] pl-2">
          {MENUS.map(([before, key, rest]) => (
            <button key={key + rest} type="button">{before}<u className="underline-offset-2">{key}</u>{rest}</button>
          ))}
          <span className="flex-1" />
          <button type="button" aria-label="Update available"><Svg className="h-[18px] w-[18px]">{ICONS.update}</Svg></button>
          <button type="button" aria-label="Close document" className="-ml-2 mr-2">
            <svg viewBox="0 0 10 10" stroke="#505050" className="h-[9px] w-[9px]" aria-hidden="true"><path d="m1 1 8 8m0-8-8 8" /></svg>
          </button>
        </nav>
        <div className="flex h-[39px] items-center pl-[3px]">
          <Grip />
          <span className="w-[5px] shrink-0" />
          <Tools items={STANDARD} />
        </div>
        <div className="flex h-[33px] items-end pl-[3px]">
          <div className="flex h-7 items-center">
            <Grip />
            <Combo label="Font name" value="Calibri" className="ml-[6px] h-6 w-[120px]" />
            <Combo label="Font size" value="12" className="ml-2 h-6 w-[46px]" />
            <Tools items={FORMATTING} />
          </div>
        </div>
      </header>
      <UpdateCallout />

      <div className="flex min-h-0 flex-1">
        <div className="flex min-w-0 flex-1 flex-col">
          {/* Formula bar */}
          <div className="flex h-7 shrink-0 items-center border-b border-[#a0a0a0]">
            <Combo label="Name box" value="B35" className="h-[23px] w-[126px]" />
            <Separator />
            <button type="button" aria-label="Function wizard" className="ml-px w-5"><Svg className="h-5 w-5">{ICONS.fx}</Svg></button>
            <button type="button" aria-label="Select function" className="ml-[5px] w-5"><Svg className="h-5 w-5">{ICONS.sum}</Svg></button>
            <button type="button" aria-label="Function list" className="ml-1.5"><Caret /></button>
            <button type="button" aria-label="Formula" className="ml-2 w-3"><Svg className="h-3 w-3">{ICONS.equals}</Svg></button>
            <span className="ml-1.5" />
            <Separator />
            <input aria-label="Input line" defaultValue="+<powervalue/>% Chance to ignite target" className="h-[23px] min-w-0 flex-1 border border-[#a0a0a0] bg-white px-[5px] text-[12px] outline-none" />
            <button type="button" aria-label="Expand formula bar" className="flex w-[27px] justify-center">
              <svg viewBox="0 0 12 6" className="h-[6px] w-3" aria-hidden="true"><path d="M0 0h12L6 6z" /></svg>
            </button>
          </div>

          {/* Grid and vertical scroll bar */}
          <div className="flex min-h-0 flex-1">
            <div className="min-w-0 flex-1 overflow-hidden">
              <Sheet selected={35} />
            </div>
            <div className="flex w-[17px] shrink-0 flex-col items-center bg-[#f0f0f0]">
              <span className="flex h-[5px] w-full items-center justify-center bg-[#a0a0a0]"><span className="h-px w-[9px] bg-black" /></span>
              <Chevron className="my-[6px] rotate-180" />
              <span className="basis-[12%]" />
              <span className="w-[15px] basis-[14%] bg-[#cdcdcd]" />
              <span className="flex-1" />
              <Chevron className="mb-1" />
            </div>
          </div>

          {/* Horizontal scroll bar */}
          <div className="flex h-4 shrink-0 items-center">
            <span className="flex w-4 justify-center"><Chevron className="rotate-90" /></span>
            <span className="h-full basis-[37.5%] bg-[#cdcdcd]" />
            <span className="flex-1" />
            <Chevron className="mr-1 -rotate-90" />
            <span className="mr-[17px] flex h-full w-1 items-center justify-center bg-[#a0a0a0]"><span className="h-[9px] w-px bg-black" /></span>
          </div>

          {/* Sheet tabs */}
          <div className="flex h-[23px] shrink-0 items-stretch">
            <div className="flex items-center gap-[10px] pl-[10px]">
              {[['First sheet', 'M1 1v10M10 1v10L2 6z'], ['Previous sheet', 'M9 1v10L2 6z'], ['Next sheet', 'M3 1v10l7-5z'], ['Last sheet', 'M11 1v10M2 1v10l8-5z']].map(([label, d]) => (
                <button key={label} type="button" aria-label={label}>
                  <svg viewBox="0 0 12 12" fill="#a0a0a0" stroke="#a0a0a0" strokeWidth="0.800" className="h-3 w-3" aria-hidden="true"><path d={d} /></svg>
                </button>
              ))}
              <button type="button" aria-label="Add sheet" className="ml-1.5 mr-[10px]">
                <svg viewBox="0 0 14 14" stroke="#000" strokeWidth="3" className="h-[14px] w-[14px]" aria-hidden="true"><path d="M7 0v14M0 7h14" /></svg>
              </button>
            </div>
            {['_Readme', 'itemprps', '_old_itemprps'].map((name) => (
              <button
                key={name}
                type="button"
                onClick={() => setTab(name)}
                className={`border-b-[3px] px-[13px] pt-[3px] ${name === tab ? 'border-[#606060] bg-white' : 'border-transparent'}`}
              >
                {name}
              </button>
            ))}
          </div>
        </div>

        {/* Splitter */}
        <div className="flex w-[7px] shrink-0 flex-col justify-center border-x border-b border-[#a0a0a0]">
          <button type="button" aria-label="Hide sidebar" className="flex h-[74px] items-center justify-center bg-[#666]">
            <span className="h-1.5 w-1 rounded-r-full bg-white" />
          </button>
        </div>

        {/* Sidebar */}
        <aside className="flex w-10 shrink-0 flex-col items-center border-b border-[#a0a0a0] bg-[#f0f0f0] pt-[13px]">
          <button type="button" aria-label="Sidebar settings" className="flex h-[13px] flex-col items-center justify-between">
            <span className="h-0.5 w-0.5 bg-[#808080]" />
            <span className="h-0.5 w-0.5 bg-[#808080]" />
            <span className="h-0.5 w-0.5 bg-[#808080]" />
          </button>
          <span className="mt-3 w-8 border-t border-[#e0e0e0]" />
          <button type="button" aria-label="Properties" className="mt-1 flex h-8 w-8 items-center justify-center rounded-[4px] border border-[#b4b4b4]">
            <Svg>{ICONS.properties}</Svg>
          </button>
          {['styles', 'gallery', 'navigator', 'fx'].map((name) => (
            <button key={name} type="button" aria-label={name} className="mt-[3px] flex h-8 w-8 items-center justify-center"><Svg>{ICONS[name]}</Svg></button>
          ))}
        </aside>
      </div>

      {/* Find bar */}
      <div className="flex h-[39px] shrink-0 items-center border-t border-[#a0a0a0] pl-[3px]">
        <Grip />
        <button type="button" aria-label="Close find bar" className="ml-[14px]">
          <svg viewBox="0 0 18 18" className="h-[18px] w-[18px]" aria-hidden="true">
            <circle cx="9" cy="9" r="9" fill="#ea8094" />
            <path d="m5 5 8 8m0-8-8 8" stroke="#fff" strokeWidth="2" />
          </svg>
        </button>
        <Combo label="Find" placeholder="Find" className="ml-2 h-6 w-[250px]" />
        <button type="button" aria-label="Find previous" className="ml-1.5">
          <svg viewBox="0 0 20 20" fill="none" stroke="#c4c4c4" strokeWidth="1.500" className="h-5 w-5" aria-hidden="true"><path d="m1 15 9-10 9 10" /></svg>
        </button>
        <button type="button" aria-label="Find next" className="ml-[13px]">
          <svg viewBox="0 0 20 20" fill="none" stroke="#c4c4c4" strokeWidth="1.500" className="h-5 w-5" aria-hidden="true"><path d="m1 5 9 10 9-10" /></svg>
        </button>
        <button type="button" className="ml-[10px] text-[#808080]">Find All</button>
        <label className="ml-[10px] flex items-center gap-1">
          <input type="checkbox" className="h-[13px] w-[13px] appearance-none border border-[#333] bg-white" />
          <span><u className="underline-offset-2">F</u>ormatted Display</span>
        </label>
        <label className="ml-1 mr-1.5 flex items-center gap-1">
          <input type="checkbox" className="h-[13px] w-[13px] appearance-none border border-[#333] bg-white" />
          <span><u className="underline-offset-2">M</u>atch Case</span>
        </label>
        <Tools items={['|', 'find', '|']} />
      </div>

      {/* Status bar */}
      <footer className="flex h-[22px] shrink-0 items-center border-t border-[#a0a0a0] [&>*]:h-4 [&>*]:leading-4">
        <span className="w-[298px] border-r border-[#a0a0a0] pl-[11px]">Sheet 2 of 3</span>
        <span className="w-[292px] border-r border-[#a0a0a0]" />
        <span className="w-[337px] border-r border-[#a0a0a0] pl-[9px]">PageStyle_itemprps</span>
        <span className="w-[305px] border-r border-[#a0a0a0] text-center">English (USA)</span>
        <span className="w-[69px] border-r border-[#a0a0a0]" />
        <span className="flex w-[30px] items-center justify-center border-r border-[#a0a0a0]">
          <svg viewBox="0 0 16 12" fill="none" stroke={GRAY} className="h-3 w-4" aria-hidden="true"><path d="M.5 3.500h8v5h-8zM11 .5h4M11 11.500h4M13 .5v11" /></svg>
        </span>
        <span className="flex w-[31px] items-center justify-center border-r border-[#a0a0a0]">
          <svg viewBox="0 0 12 12" fill="none" stroke="#e0788c" className="h-[11px] w-[11px]" aria-hidden="true"><path d="M1 1h8l2 2v8H1zM3.500 1v3.500h5V1M3.500 11V7.500h5V11" /></svg>
        </span>
        <span className="w-[30px] border-r border-[#a0a0a0]" />
        <span className="flex-1 border-r border-[#a0a0a0] text-center">Average: ; Sum: 0</span>
        <span className="flex w-[144px] items-center justify-end gap-[5px] border-r border-[#a0a0a0] pr-[5px]">
          <button type="button" aria-label="Zoom out"><svg viewBox="0 0 10 10" stroke="#606060" strokeWidth="2" className="h-[10px] w-[10px]" aria-hidden="true"><path d="M0 5h10" /></svg></button>
          <input
            type="range"
            aria-label="Zoom"
            value={zoom}
            onChange={(e) => setZoom(e.target.value)}
            className="h-0.5 w-[98px] appearance-none bg-[#707070] [&::-webkit-slider-thumb]:h-[11px] [&::-webkit-slider-thumb]:w-[6px] [&::-webkit-slider-thumb]:appearance-none [&::-webkit-slider-thumb]:rounded-[1px] [&::-webkit-slider-thumb]:bg-[#606060]"
          />
          <button type="button" aria-label="Zoom in"><svg viewBox="0 0 10 10" stroke="#606060" strokeWidth="2" className="h-[10px] w-[10px]" aria-hidden="true"><path d="M0 5h10M5 0v10" /></svg></button>
        </span>
        <span className="w-[47px] pl-2">115%</span>
      </footer>
    </div>
  );
}
